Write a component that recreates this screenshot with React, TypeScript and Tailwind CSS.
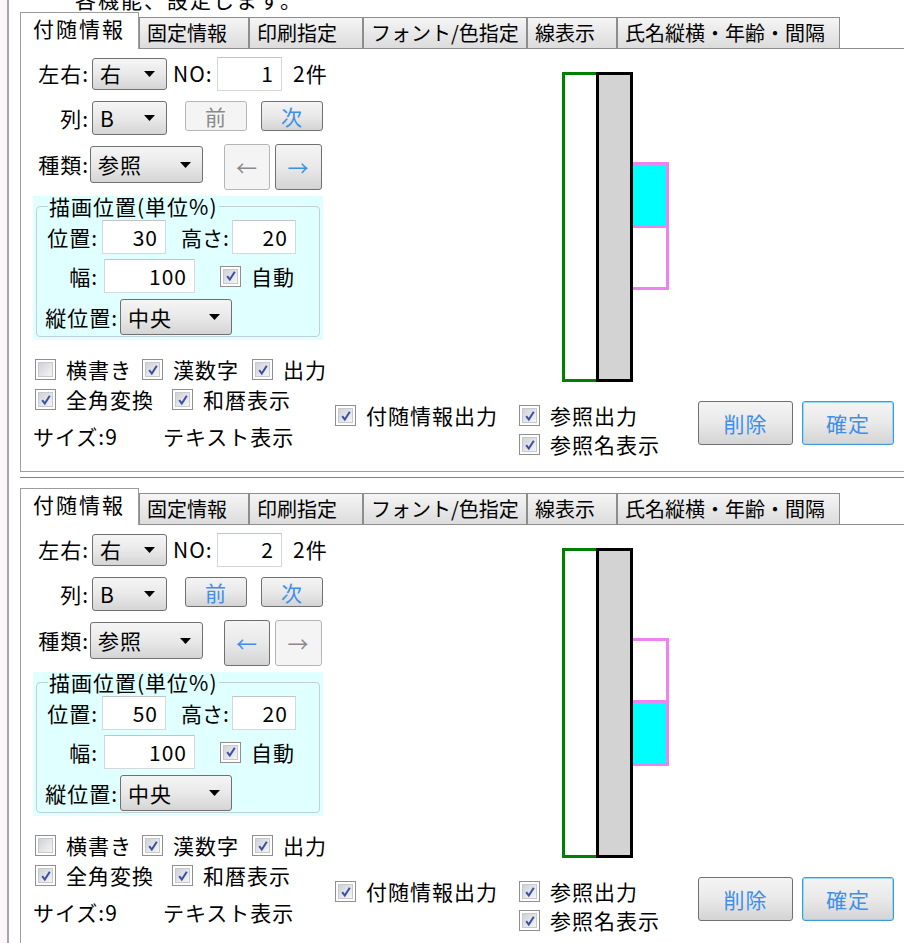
import React from 'react';

interface RecordProps {
  no: number;
  pos: number;
  prevOn: boolean;
  leftOn: boolean;
  cyanTop: boolean;
}

const TABS = [
  { label: '固定情報', w: 'w-[110px]' },
  { label: '印刷指定', w: 'w-[114px]' },
  { label: 'フォント/色指定', w: 'w-[164px]' },
  { label: '線表示', w: 'w-[90px]' },
  { label: '氏名縦横・年齢・間隔', w: 'w-[223px]' },
];

const Check = ({ checked }: { checked?: boolean }) => (
  <span className="flex h-[21px] w-[21px] shrink-0 items-center justify-center border border-[#8f8f8f] bg-white p-[2px]">
    <span className="flex h-full w-full items-center justify-center border border-[#c6c9ce] bg-linear-to-br from-[#cfd2d7] to-[#f5f5f5]">
      {checked && (
        <svg viewBox="0 0 12 12" className="h-[12px] w-[12px]">
          <path d="M2.2 6.2 L4.8 9.6 L9.8 1.8" fill="none" stroke="#3b4ea6" strokeWidth="2" />
        </svg>
      )}
    </span>
  </span>
);

const CheckItem = ({ checked, label, className = '' }: { checked?: boolean; label: string; className?: string }) => (
  <div className={`flex h-[21px] shrink-0 items-center gap-[10px] whitespace-nowrap ${className}`}>
    <Check checked={checked} />
    <span>{label}</span>
  </div>
);

const Select = ({ value, className = '' }: { value: string; className?: string }) => (
  <div className={`flex shrink-0 items-center justify-between rounded-[3px] border border-[#707070] bg-linear-to-b from-[#f5f5f5] via-[#e9e9e9] to-[#d5d5d5] pl-[7px] pr-[11px] ${className}`}>
    <span>{value}</span>
    <svg width="11" height="6" viewBox="0 0 11 6">
      <polygon points="0,0 11,0 5.5,6" fill="#000" />
    </svg>
  </div>
);

const Field = ({ value, className = '' }: { value: string | number; className?: string }) => (
  <div className={`flex shrink-0 items-center justify-end border border-[#d3d8de] border-t-[#bfc4cb] bg-white pr-[7px] ${className}`}>
    {value}
  </div>
);

const Btn = ({ children, on = true, focus = false, className = '' }: { children: React.ReactNode; on?: boolean; focus?: boolean; className?: string }) => (
  <div
    className={`flex shrink-0 items-center justify-center rounded-[3px] border ${
      on
        ? 'bg-linear-to-b from-[#f4f4f4] via-[#e9e9e9] to-[#d4d4d4] text-[#3d8fea]'
        : 'bg-[#f4f4f4] text-[#8a8a8a]'
    } ${focus ? 'border-[#3c9ad8] shadow-[inset_0_0_0_1px_#9ad8f6]' : on ? 'border-[#707070]' : 'border-[#b3b6b9]'} ${className}`}
  >
    {children}
  </div>
);

const Diagram = ({ cyanTop }: { cyanTop: boolean }) => (
  <svg width="108" height="312" viewBox="0 0 108 312">
    <rect x="68" y="91.5" width="37.5" height="125" fill="#fff" stroke="#ee82ee" strokeWidth="3" />
    <rect x="68" y={cyanTop ? 91.5 : 153.5} width="37.5" height="63" fill="#00ffff" stroke="#ee82ee" strokeWidth="3" />
    <rect x="1.5" y="1.5" width="34" height="307" fill="#fff" stroke="#008000" strokeWidth="3" />
    <rect x="35.5" y="1.5" width="34" height="307" fill="#d3d3d3" stroke="#000" strokeWidth="3" />
  </svg>
);

function Record({ no, pos, prevOn, leftOn, cyanTop }: RecordProps) {
  return (
    <div className="mb-[10px] border-b border-[#808080] pb-[5px]">
      {/* tab strip */}
      <div className="flex h-[37px] items-end whitespace-nowrap tracking-normal">
        <div className="h-[37px] w-[119px] shrink-0 border-l border-r border-t border-[#9c9c9c] bg-white pl-[12px] pt-[5px] tracking-[2px]">
          付随情報
        </div>
        {TABS.map((t) => (
          <div
            key={t.label}
            className={`flex h-[32px] shrink-0 items-center overflow-hidden border border-[#8d8d8d] bg-linear-to-b from-[#f5f5f5] to-[#dcdcdc] pl-[7px] text-[20px] ${t.w}`}
          >
            {t.label}
          </div>
        ))}
        <div className="h-full flex-1 border-b border-[#8d8d8d]" />
      </div>

      <div className="flex h-[423px] border-b border-l border-[#a0a0a0] pl-[12px]">
        {/* left column */}
        <div className="flex w-[297px] shrink-0 flex-col">
          <div className="mt-[7px] flex h-[35px] items-center">
            <span className="w-[56px] text-right">左右:</span>
            <Select value="右" className="ml-[3px] h-[32px] w-[75px]" />
            <span className="ml-[6px] w-[44px]">NO:</span>
            <Field value={no} className="h-[34px] w-[65px]" />
            <span className="ml-[11px]">2件</span>
          </div>

          <div className="mt-[10px] flex h-[36px] items-start">
            <span className="flex h-[34px] w-[56px] items-center justify-end">列:</span>
            <Select value="B" className="ml-[3px] h-[34px] w-[75px]" />
            <Btn on={prevOn} className="ml-[18px] h-[30px] w-[62px]">前</Btn>
            <Btn className="ml-[14px] h-[30px] w-[62px]">次</Btn>
          </div>

          <div className="mt-[7px] flex h-[46px] items-start">
            <span className="mt-[2px] flex h-[37px] w-[56px] items-center justify-end">種類:</span>
            <Select value="参照" className="ml-[1px] mt-[2px] h-[37px] w-[113px]" />
            <Btn on={leftOn} className="ml-[21px] h-[46px] w-[46px]">←</Btn>
            <Btn on={!leftOn} className="ml-[5px] h-[46px] w-[47px]">→</Btn>
          </div>

          <div className="mt-[6px] h-[144px] w-[290px] bg-[#e0ffff] px-[3px] pb-[3px]">
            <fieldset className="h-full rounded-[4px] border border-[#c2cfd4]">
              <legend className="ml-[11px] px-[1px] leading-[20px]">描画位置(単位%)</legend>
              <div className="mt-[4px] flex h-[34px] items-center whitespace-nowrap">
                <span className="w-[61px] text-right">位置:</span>
                <Field value={pos} className="ml-[4px] h-[34px] w-[64px]" />
                <span className="ml-[15px] tracking-normal">高さ:</span>
                <Field value={20} className="ml-[3px] h-[34px] w-[64px]" />
              </div>
              <div className="mt-[5px] flex h-[34px] items-center">
                <span className="w-[61px] text-right">幅:</span>
                <Field value={100} className="ml-[6px] h-[34px] w-[91px]" />
                <CheckItem checked label="自動" className="ml-[25px]" />
              </div>
              <div className="mt-[6px] flex h-[36px] items-center">
                <span className="w-[81px] whitespace-nowrap text-right">縦位置:</span>
                <Select value="中央" className="ml-[2px] h-[36px] w-[112px]" />
              </div>
            </fieldset>
          </div>

          <div className="mt-[19px] flex pl-[2px]">
            <CheckItem label="横書き" className="w-[107px]" />
            <CheckItem checked label="漢数字" className="w-[110px]" />
            <CheckItem checked label="出力" />
          </div>
          <div className="mt-[9px] flex pl-[2px]">
            <CheckItem checked label="全角変換" className="w-[137px]" />
            <CheckItem checked label="和暦表示" />
          </div>
          <div className="mt-[16px] flex h-[20px] items-center whitespace-nowrap">
            <span className="w-[130px]">サイズ:9</span>
            <span>テキスト表示</span>
          </div>
        </div>

        {/* right column */}
        <div className="flex flex-1 flex-col">
          <div className="mt-[23px] pl-[232px]">
            <Diagram cyanTop={cyanTop} />
          </div>
          <div className="mt-[17px] flex items-start">
            <CheckItem checked label="付随情報出力" className="ml-[5px] mt-[4px] w-[184px]" />
            <div className="flex w-[179px] shrink-0 flex-col">
              <CheckItem checked label="参照出力" className="mt-[4px]" />
              <CheckItem checked label="参照名表示" className="mt-[8px]" />
            </div>
            <Btn className="h-[44px] w-[95px]">削除</Btn>
            <Btn focus className="ml-[9px] h-[44px] w-[92px]">確定</Btn>
          </div>
        </div>
      </div>
    </div>
  );
}

export default function App() {
  return (
    <div className="flex h-[943px] w-[904px] overflow-hidden bg-white font-['Noto_Sans_CJK_JP',sans-serif] text-[21px] leading-none tracking-[1px] text-black">
      <div className="w-[7px] shrink-0 bg-[#faf6fa]" />
      <div className="w-[2px] shrink-0 bg-[#aaa3aa]" />
      <div className="flex-1 pl-[11px]">
        <div className="h-[12px] overflow-hidden pl-[55px]">
          <div className="mt-[-11px] leading-[20px] tracking-[2px]">各機能、設定します。</div>
        </div>
        <Record no={1} pos={30} prevOn={false} leftOn={false} cyanTop />
        <Record no={2} pos={50} prevOn leftOn cyanTop={false} />
      </div>
    </div>
  );
}
